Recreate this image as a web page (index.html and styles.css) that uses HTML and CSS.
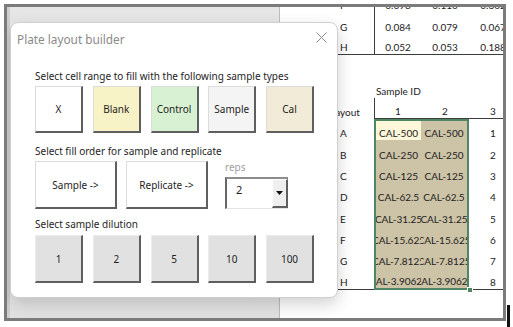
FILE: index.html
```html
<!DOCTYPE html>
<html lang="en">

<head>
    <meta charset="UTF-8">
    <title>Plate layout builder</title>
    <link rel="stylesheet" href="styles.css">
</head>

<body>
    <div class="frame">
        <section class="sheet">
            <div class="backdrop"></div>

            <div class="cell lbl">F</div>
            <div class="cell vl">0.098</div>
            <div class="cell">0.110</div>
            <div class="cell">0.362</div>

            <div class="cell lbl">G</div>
            <div class="cell vl">0.084</div>
            <div class="cell">0.079</div>
            <div class="cell">0.067</div>

            <div class="cell lbl bl">H</div>
            <div class="cell vl bl">0.052</div>
            <div class="cell bl">0.053</div>
            <div class="cell bl">0.188</div>

            <div class="cell"></div>
            <div class="cell"></div>
            <div class="cell"></div>
            <div class="cell"></div>

            <div class="cell"></div>
            <div class="cell title-cell">Sample ID</div>
            <div class="cell"></div>
            <div class="cell"></div>

            <div class="cell lbl layout">Layout</div>
            <div class="cell vl bl">1</div>
            <div class="cell bl">2</div>
            <div class="cell bl">3</div>

            <div class="cell lbl">A</div>
            <div class="cell sel l t act">CAL-500</div>
            <div class="cell sel r t">CAL-500</div>
            <div class="cell">1</div>

            <div class="cell lbl">B</div>
            <div class="cell sel l">CAL-250</div>
            <div class="cell sel r">CAL-250</div>
            <div class="cell">2</div>

            <div class="cell lbl">C</div>
            <div class="cell sel l">CAL-125</div>
            <div class="cell sel r">CAL-125</div>
            <div class="cell">3</div>

            <div class="cell lbl">D</div>
            <div class="cell sel l">CAL-62.5</div>
            <div class="cell sel r">CAL-62.5</div>
            <div class="cell">4</div>

            <div class="cell lbl">E</div>
            <div class="cell sel l">CAL-31.25</div>
            <div class="cell sel r">CAL-31.25</div>
            <div class="cell">5</div>

            <div class="cell lbl">F</div>
            <div class="cell sel l">CAL-15.625</div>
            <div class="cell sel r">CAL-15.625</div>
            <div class="cell">6</div>

            <div class="cell lbl">G</div>
            <div class="cell sel l">CAL-7.8125</div>
            <div class="cell sel r">CAL-7.8125</div>
            <div class="cell">7</div>

            <div class="cell lbl bl">H</div>
            <div class="cell sel l b">CAL-3.90625</div>
            <div class="cell sel r b">CAL-3.90625</div>
            <div class="cell bl">8</div>
        </section>

        <div class="handle"></div>

        <!-- dialog ligger oven på regnearket -->
        <div class="dialog">
            <div class="titlebar">
                <span class="title">Plate layout builder</span>
                <svg class="close" width="11" height="11" viewBox="0 0 11 11">
                    <path d="M0.5 0.5 L10.5 10.5 M10.5 0.5 L0.5 10.5" stroke="#8c8c8c" stroke-width="1" fill="none" />
                </svg>
            </div>
            <div class="content">
                <p class="label">Select cell range to fill with the following sample types</p>
                <div class="row">
                    <button class="btn sq type-x">X</button>
                    <button class="btn sq type-blank">Blank</button>
                    <button class="btn sq type-control">Control</button>
                    <button class="btn sq type-sample">Sample</button>
                    <button class="btn sq type-cal">Cal</button>
                </div>

                <p class="label">Select fill order for sample and replicate</p>
                <div class="row order">
                    <button class="btn wide">Sample -&gt;</button>
                    <button class="btn wide">Replicate -&gt;</button>
                    <div class="reps">
                        <span class="reps-label">reps</span>
                        <div class="combo">
                            <span class="combo-value">2</span>
                            <span class="combo-drop">
                                <svg width="7" height="4" viewBox="0 0 7 4">
                                    <polygon points="0,0 7,0 3.5,4" fill="#111" />
                                </svg>
                            </span>
                        </div>
                    </div>
                </div>

                <p class="label">Select sample dilution</p>
                <div class="row">
                    <button class="btn sq dil">1</button>
                    <button class="btn sq dil">2</button>
                    <button class="btn sq dil">5</button>
                    <button class="btn sq dil">10</button>
                    <button class="btn sq dil">100</button>
                </div>
            </div>
        </div>
    </div>
    <div class="caret"></div>
</body>

</html>
```

FILE: styles.css
```css
* {
    box-sizing: border-box;
}

body {
    margin: 0;
    padding: 4px 0 0 4px;
    height: 327px;
    display: flex;
    overflow: hidden;
    background: #fff;
    font-family: "Noto Sans", sans-serif;
}

.frame {
    position: relative;
    flex: none;
    width: 502px;
    height: 317px;
    border: 3px solid #7b7b7b;
    overflow: hidden;
    background: #fff;
}

.caret {
    width: 3px;
    height: 22px;
    margin-left: 1px;
    align-self: flex-end;
    background: #111;
}

/* regnearket bagved */
.sheet {
    display: grid;
    grid-template-columns: 323px 44px 47px 48px 48px;
    grid-template-rows: repeat(14, 21.35px) 40px;
    margin-top: -16px;
    font-family: Lato, sans-serif;
    font-size: 10px;
    color: #222;
}

.backdrop {
    grid-row: 1 / -1;
    grid-column: 1;
    width: 273px;
    background: linear-gradient(#e6e6e6 8%, #f6f6f6 20%, #f4f4f4 80%, #dcdcdc 100%);
    border-right: 1px solid #bdbdbd;
    box-shadow: inset 3px 0 #cfcfcf;
}

.cell {
    display: flex;
    align-items: flex-end;
    justify-content: center;
    overflow: hidden;
    white-space: nowrap;
    line-height: 12px;
    padding-bottom: 1px;
}

.lbl {
    justify-content: flex-start;
    padding-left: 10px;
}

.layout {
    padding-left: 0;
}

.title-cell {
    overflow: visible;
    justify-content: flex-start;
    padding-left: 2px;
}

.vl {
    border-left: 1px solid #3c3c3c;
}

.bl {
    border-bottom: 1px solid #3c3c3c;
}

.sel {
    background: #cdc3a6;
}

.sel.act {
    background: #fff7d9;
}

.sel.l {
    border-left: 2px solid #4f8663;
}

.sel.r {
    border-right: 2px solid #4f8663;
}

.sel.t {
    border-top: 2px solid #4f8663;
}

.sel.b {
    border-bottom: 2px solid #4f8663;
}

.handle {
    position: absolute;
    left: 460px;
    top: 280px;
    width: 6px;
    height: 6px;
    background: #4f8663;
    border: 1px solid #fff;
}

/* dialogen */
.dialog {
    position: absolute;
    left: 3px;
    top: 15px;
    width: 328px;
    height: 276px;
    background: #fff;
    border: 1px solid #cfcfcf;
    border-radius: 8px;
    box-shadow: 0 6px 16px rgba(0, 0, 0, 0.18);
}

.titlebar {
    height: 31px;
    display: flex;
    align-items: center;
    justify-content: space-between;
    padding: 0 10px 0 6px;
}

.title {
    font-size: 11.8px;
    line-height: 16px;
    color: #8a8a8a;
}

.close {
    margin-top: -2px;
}

.content {
    padding-left: 24px;
}

.label {
    margin: 0;
    font-size: 10px;
    line-height: 16px;
    color: #1e1e1e;
}

.content .label:nth-of-type(1) {
    margin-top: 14px;
}

.content .label:nth-of-type(2) {
    margin-top: 10px;
}

.content .label:nth-of-type(3) {
    margin-top: 7px;
}

.row {
    display: flex;
    gap: 9.75px;
    margin-top: 2px;
}

.row:last-child {
    margin-top: 3px;
}

.btn {
    margin: 0;
    padding: 0;
    font-family: "Noto Sans", sans-serif;
    font-size: 10px;
    color: #1e1e1e;
    border-style: solid;
    border-width: 1px 2px 2px 1px;
    border-color: #dcdcdc #5f5f5f #5f5f5f #dcdcdc;
    border-radius: 0;
    background: #fff;
}

.sq {
    width: 48px;
    height: 48px;
}

.row:first-of-type .sq {
    height: 47px;
}

.type-blank {
    background: #f7f3c6;
}

.type-control {
    background: #d9f1d3;
}

.type-sample {
    background: #f4f4f4;
}

.type-cal {
    background: #f2ebd7;
}

.dil {
    background: #e1e1e1;
    border-color: #ececec #5f5f5f #5f5f5f #ececec;
}

.order {
    gap: 9px;
}

.wide {
    width: 82px;
    height: 48px;
}

.reps {
    margin-left: 8px;
    display: flex;
    flex-direction: column;
}

.reps-label {
    font-size: 10px;
    line-height: 12px;
    color: #a0a0a0;
}

.combo {
    margin-top: 4px;
    width: 63px;
    height: 32px;
    display: flex;
    border-style: solid;
    border-width: 2px 0 1px 2px;
    border-color: #8c8c8c #e4e4e4 #e4e4e4 #666;
    background: #fff;
}

.combo-value {
    flex: 1;
    padding: 4px 0 0 9px;
    font-size: 11px;
    line-height: 14px;
    color: #1e1e1e;
}

.combo-drop {
    width: 16px;
    display: flex;
    align-items: center;
    justify-content: center;
    background: #efefef;
    border-style: solid;
    border-width: 1px 2px 2px 1px;
    border-color: #fff #5f5f5f #5f5f5f #fff;
}
```
